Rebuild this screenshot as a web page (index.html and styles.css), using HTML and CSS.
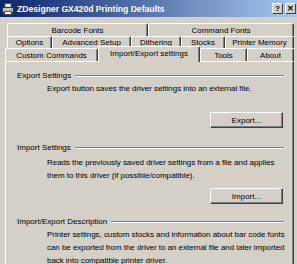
FILE: index.html
```html
<!DOCTYPE html>
<html lang="en">
<head>
    <meta charset="UTF-8">
    <title>ZDesigner GX420d Printing Defaults</title>
    <link rel="stylesheet" href="styles.css">
</head>
<body>
    <div class="dialog">
        <!-- Title bar -->
        <div class="titlebar">
            <svg class="app-icon" width="12" height="12" viewBox="0 0 12 12">
                <rect x="3" y="0.5" width="6" height="4" fill="#fff" stroke="#555" stroke-width="1"/>
                <rect x="0.5" y="4.5" width="11" height="5" fill="#c0c0c0" stroke="#333" stroke-width="1"/>
                <rect x="2.5" y="8.5" width="7" height="3" fill="#fff" stroke="#555" stroke-width="1"/>
                <rect x="9" y="6" width="1" height="1" fill="#0a0"/>
            </svg>
            <span class="title">ZDesigner GX420d Printing Defaults</span>
            <div class="title-buttons">
                <span class="tb-btn">?</span>
                <span class="tb-btn">&#x2715;</span>
            </div>
        </div>

        <!-- Tab rows -->
        <div class="tabs">
            <div class="tab-row row-1">
                <div class="tab t-barcode">Barcode Fonts</div>
                <div class="tab t-command">Command Fonts</div>
            </div>
            <div class="tab-row row-2">
                <div class="tab t-options">Options</div>
                <div class="tab t-advanced">Advanced Setup</div>
                <div class="tab t-dithering">Dithering</div>
                <div class="tab t-stocks">Stocks</div>
                <div class="tab t-memory">Printer Memory</div>
            </div>
            <div class="tab-row row-3">
                <div class="tab t-custom">Custom Commands</div>
                <div class="tab t-import selected">Import/Export settings</div>
                <div class="tab t-tools">Tools</div>
                <div class="tab t-about">About</div>
            </div>
        </div>

        <!-- Tab page -->
        <div class="panel">
            <div class="group-head group-export">
                <span>Export Settings</span>
                <span class="groove"></span>
            </div>
            <p class="desc">Export button saves the driver settings into an external file.</p>
            <div class="btn-line btn-export">
                <button class="btn">Export...</button>
            </div>

            <div class="group-head group-import">
                <span>Import Settings</span>
                <span class="groove"></span>
            </div>
            <p class="desc desc-import">Reads the previously saved driver settings from a file and applies them to this driver (if possible/compatible).</p>
            <div class="btn-line btn-import">
                <button class="btn">Import...</button>
            </div>

            <div class="group-head group-desc">
                <span>Import/Export Description</span>
                <span class="groove"></span>
            </div>
            <p class="desc">Printer settings, custom stocks and information about bar code fonts can be exported from the driver to an external file and later imported back into compatible printer driver.</p>
        </div>
    </div>
</body>
</html>
```

FILE: styles.css
```css
/* Reset */
* {
    margin: 0;
    padding: 0;
    box-sizing: border-box;
}

body {
    font-family: "Liberation Sans", Arial, sans-serif;
    font-size: 8px;
    color: #000;
    background: #d4d0c8;
}

.dialog {
    width: 297px;
    height: 264px;
    overflow: hidden;
    background: #d4d0c8;
}

/* Title bar */
.titlebar {
    height: 17px;
    display: flex;
    align-items: center;
    padding: 0 1px 0 2px;
    background: linear-gradient(90deg, #0a246a, #a6caf0);
    color: #fff;
}

.app-icon {
    margin-right: 3px;
    flex-shrink: 0;
}

.title {
    font-weight: bold;
    font-size: 8.6px;
    white-space: nowrap;
}

.title-buttons {
    margin-left: auto;
    display: flex;
    gap: 2px;
}

.tb-btn {
    width: 11px;
    height: 11px;
    display: flex;
    align-items: center;
    justify-content: center;
    background: #d4d0c8;
    color: #000;
    font-weight: bold;
    font-size: 8px;
    border-top: 1px solid #fff;
    border-left: 1px solid #fff;
    border-right: 1px solid #404040;
    border-bottom: 1px solid #404040;
}

/* Tabs */
.tabs {
    padding: 6px 3px 0 0;
}

.tab-row {
    display: flex;
}

.row-1 {
    height: 13px;
    margin-left: 7px;
}

.row-2 {
    height: 12px;
    margin-left: 7px;
}

.row-3 {
    height: 13px;
    margin-left: 5px;
}

.tab {
    display: flex;
    align-items: center;
    justify-content: center;
    white-space: nowrap;
    border-top: 1px solid #fff;
    border-left: 1px solid #fff;
    border-right: 1px solid #404040;
    border-radius: 2px 2px 0 0;
    box-shadow: inset -1px 0 0 #808080;
    background: #d4d0c8;
}

.t-barcode { width: 141px; }
.t-command { flex: 1; }

.t-options { width: 45px; }
.t-advanced { width: 79px; }
.t-dithering { width: 50px; }
.t-stocks { width: 44px; }
.t-memory { flex: 1; }

.t-custom { width: 93px; }
.t-import { width: 102px; }
.t-tools { width: 47px; }
.t-about { flex: 1; }

.tab.selected {
    align-self: flex-start;
    height: 16px;
    margin-top: -2px;
    padding-bottom: 2px;
    position: relative;
    z-index: 1;
}

/* Tab page */
.panel {
    height: 203px;
    margin: 0 3px 0 5px;
    padding: 7px 9px 0 11px;
    border-top: 1px solid #fff;
    border-left: 1px solid #fff;
    border-right: 1px solid #404040;
    box-shadow: inset -1px 0 0 #808080;
}

.group-head {
    display: flex;
    align-items: center;
    height: 13px;
}

.groove {
    flex: 1;
    margin-left: 4px;
    height: 2px;
    border-top: 1px solid #808080;
    border-bottom: 1px solid #fff;
}

.desc {
    padding-left: 30px;
    margin-right: -8px;
    line-height: 13px;
    letter-spacing: -0.05px;
}

.desc-import {
    margin-top: 2px;
    padding-right: 10px;
}

.btn-line {
    display: flex;
    justify-content: flex-end;
    padding-right: 1px;
}

.btn-export {
    margin-top: 17px;
}

.btn-import {
    margin-top: 6px;
}

.group-import {
    margin-top: 13px;
}

.group-desc {
    margin-top: 11px;
}

.btn {
    width: 73px;
    height: 16px;
    font-family: inherit;
    font-size: 8px;
    color: #000;
    background: #d4d0c8;
    border-top: 1px solid #fff;
    border-left: 1px solid #fff;
    border-right: 1px solid #404040;
    border-bottom: 1px solid #404040;
    box-shadow: inset -1px -1px 0 #808080;
}
```
